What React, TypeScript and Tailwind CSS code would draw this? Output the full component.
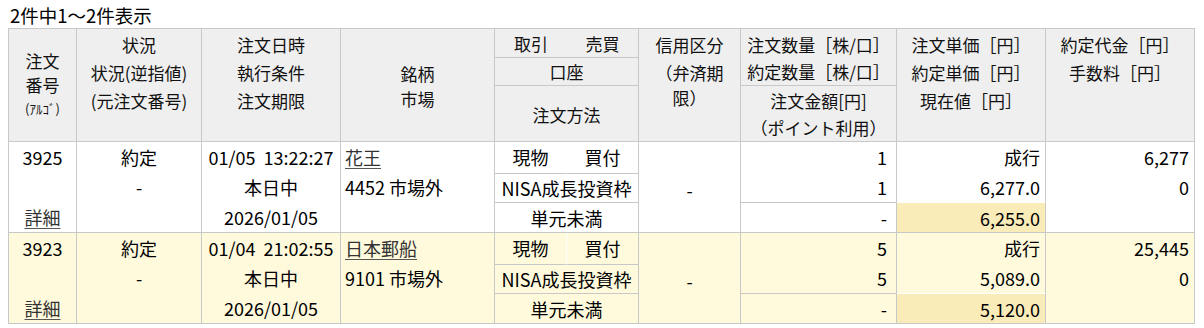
const B = "border-r border-b border-[#c8c8c8]";

type Order = {
  no: string;
  date: string;
  link: string;
  market: string;
  qty: string;
  price: string;
  now: string;
  amount: string;
  bg: string;
};

const orders: Order[] = [
  { no: "3925", date: "01/05\u00a0\u00a013:22:27", link: "花王", market: "4452 市場外", qty: "1", price: "6,277.0", now: "6,255.0", amount: "6,277", bg: "bg-white" },
  { no: "3923", date: "01/04\u00a0\u00a021:02:55", link: "日本郵船", market: "9101 市場外", qty: "5", price: "5,089.0", now: "5,120.0", amount: "25,445", bg: "bg-[#fffadc]" },
];

function Lines({ items, align = "text-center" }: { items: React.ReactNode[]; align?: string }) {
  return (
    <div className={align}>
      {items.map((t, i) => (
        <div key={i} className="h-[30px] leading-[30px] whitespace-nowrap">{t}</div>
      ))}
    </div>
  );
}

function Rows({ o }: { o: Order }) {
  const link = "text-[#333] underline underline-offset-[3px] decoration-[#555]";
  return (
    <>
      <tr className={`${o.bg} text-[18px] text-black`}>
        <td rowSpan={3} className={`${B} align-top`}>
          <Lines items={[o.no, "", <span className={link}>詳細</span>]} />
        </td>
        <td rowSpan={3} className={`${B} align-top`}>
          <Lines items={["約定", "-", ""]} />
        </td>
        <td rowSpan={3} className={`${B} align-top`}>
          <Lines items={[o.date, "本日中", "2026/01/05"]} />
        </td>
        <td rowSpan={3} className={`${B} align-top pl-[4px]`}>
          <Lines align="text-left" items={[<span className={link}>{o.link}</span>, o.market, ""]} />
        </td>
        <td className="h-[31px] border-r border-r-white border-b border-b-[#c8c8c8] text-center leading-[30px]">現物</td>
        <td className={`h-[31px] ${B} text-center leading-[30px]`}>買付</td>
        <td rowSpan={3} className={`${B} text-center pt-[6px]`}>-</td>
        <td rowSpan={2} className={`${B} align-top pr-[9px]`}>
          <Lines align="text-right" items={[o.qty, o.qty]} />
        </td>
        <td rowSpan={2} className="border-r border-r-[#c8c8c8] border-b border-b-white align-top pr-[5px]">
          <Lines align="text-right" items={["成行", o.price]} />
        </td>
        <td rowSpan={3} className={`${B} align-top pr-[5px]`}>
          <Lines align="text-right" items={[o.amount, "0", ""]} />
        </td>
      </tr>
      <tr className={`${o.bg} text-[18px] text-black`}>
        <td colSpan={2} className={`h-[29px] ${B} text-center leading-[28px]`}>NISA成長投資枠</td>
      </tr>
      <tr className={`${o.bg} text-[18px] text-black`}>
        <td colSpan={2} className={`h-[30px] ${B} text-center leading-[28px] pt-[1px]`}>単元未満</td>
        <td className={`${B} text-right pr-[9px] leading-[28px] pt-[1px]`}>-</td>
        <td className={`${B} bg-[#faecb8] text-right pr-[5px] leading-[28px] pt-[1px]`}>{o.now}</td>
      </tr>
    </>
  );
}

export default function App() {
  return (
    <main className="bg-white text-[#111] text-[17px] font-['Noto_Sans_CJK_JP','Noto_Sans',sans-serif] h-[328px] overflow-hidden">
      <h1 className="pl-[10px] pt-[2px] h-[28px] leading-[26px] text-[18.5px] font-normal text-black">2件中1〜2件表示</h1>
      <table className="ml-[8px] w-[1187px] table-fixed border-separate border-spacing-0 border-l border-t border-[#c8c8c8]">
        <colgroup>
          <col className="w-[68px]" />
          <col className="w-[125px]" />
          <col className="w-[139px]" />
          <col className="w-[154px]" />
          <col className="w-[72px]" />
          <col className="w-[72px]" />
          <col className="w-[102px]" />
          <col className="w-[156px]" />
          <col className="w-[149px]" />
          <col className="w-[149px]" />
        </colgroup>
        <thead className="bg-[#efefef] font-normal">
          <tr>
            <th rowSpan={3} className={`${B} font-normal text-center leading-[24px]`}>
              <div>注文</div>
              <div>番号</div>
              <div className="text-[13px]">(ｱﾙｺﾞ)</div>
            </th>
            <th rowSpan={3} className={`${B} font-normal align-top pt-[2px] leading-[28px]`}>
              <div>状況</div>
              <div>状況(逆指値)</div>
              <div>(元注文番号)</div>
            </th>
            <th rowSpan={3} className={`${B} font-normal align-top pt-[2px] leading-[28px]`}>
              <div>注文日時</div>
              <div>執行条件</div>
              <div>注文期限</div>
            </th>
            <th rowSpan={3} className={`${B} font-normal leading-[25px] pt-[2px]`}>
              <div>銘柄</div>
              <div>市場</div>
            </th>
            <th className={`h-[29px] border-b border-[#c8c8c8] font-normal leading-[27px]`}>取引</th>
            <th className={`h-[29px] ${B} font-normal leading-[27px]`}>売買</th>
            <th rowSpan={3} className={`${B} font-normal align-top pt-[2px] leading-[28px]`}>
              <div>信用区分</div>
              <div className="leading-[27px]">（弁済期</div>
              <div className="leading-[24px]">限）</div>
            </th>
            <th rowSpan={2} className={`${B} font-normal leading-[27px] pt-[2px]`}>
              <div>注文数量［株/口］</div>
              <div>約定数量［株/口］</div>
            </th>
            <th rowSpan={3} className={`${B} font-normal align-top pt-[2px] leading-[28px]`}>
              <div>注文単価［円］</div>
              <div>約定単価［円］</div>
              <div>現在値［円］</div>
            </th>
            <th rowSpan={3} className={`${B} font-normal align-top pt-[2px] leading-[28px]`}>
              <div>約定代金［円］</div>
              <div>手数料［円］</div>
            </th>
          </tr>
          <tr>
            <th colSpan={2} className={`h-[28px] ${B} font-normal leading-[26px]`}>口座</th>
          </tr>
          <tr>
            <th colSpan={2} className={`h-[56px] ${B} font-normal pt-[2px]`}>注文方法</th>
            <th className={`h-[56px] ${B} font-normal leading-[27px]`}>
              <div>注文金額[円]</div>
              <div>（ポイント利用）</div>
            </th>
          </tr>
        </thead>
        <tbody>
          {orders.map((o) => (
            <Rows key={o.no} o={o} />
          ))}
        </tbody>
      </table>
    </main>
  );
}
